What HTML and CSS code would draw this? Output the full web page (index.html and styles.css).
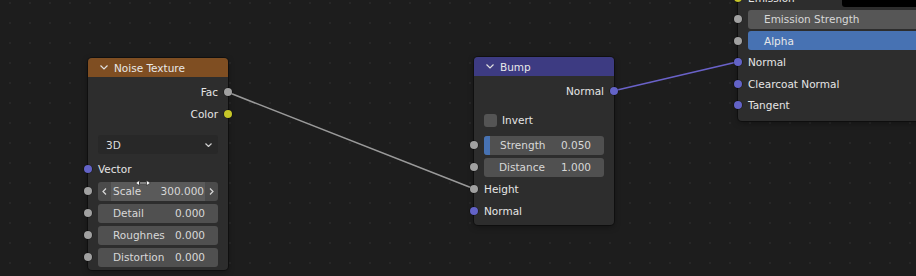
FILE: index.html
```html
<!DOCTYPE html>
<html lang="en">
<head>
  <meta charset="UTF-8" />
  <meta name="viewport" content="width=device-width, initial-scale=1.0" />
  <title>Node Editor</title>
  <link rel="stylesheet" href="styles.css">
</head>
<body>
  <div class="editor">
    <svg class="links" width="916" height="276" viewBox="0 0 916 276">
      <line class="link link-grey" x1="228" y1="92.3" x2="474.5" y2="189" />
      <line class="link link-vector" x1="614" y1="90.7" x2="738" y2="61.7" />
    </svg>

    <!-- Noise Texture -->
    <div class="node node-noise">
      <div class="node-header header-texture">
        <svg class="chevron" width="8" height="5" viewBox="0 0 8 5"><polyline points="0.5,0.5 4,4 7.5,0.5" /></svg>
        <span>Noise Texture</span>
      </div>
      <div class="node-body">
        <div class="row row-out"><span>Fac</span><i class="socket out grey"></i></div>
        <div class="row row-out"><span>Color</span><i class="socket out yellow"></i></div>
        <div class="dropdown">
          <span>3D</span>
          <svg class="chevron small" width="7" height="4" viewBox="0 0 7 4"><polyline points="0.5,0.5 3.5,3.5 6.5,0.5" /></svg>
        </div>
        <div class="row row-in gap-top"><i class="socket in purple"></i><span>Vector</span></div>
        <div class="row row-field">
          <i class="socket in grey"></i>
          <div class="field field-hover">
            <span class="arrow">
              <svg width="5" height="7" viewBox="0 0 5 7"><polyline points="4,0.5 1,3.5 4,6.5" /></svg>
            </span>
            <span class="field-mid"><span>Scale</span><span>300.000</span></span>
            <span class="arrow">
              <svg width="5" height="7" viewBox="0 0 5 7"><polyline points="1,0.5 4,3.5 1,6.5" /></svg>
            </span>
          </div>
          <svg class="cursor" width="16" height="6" viewBox="0 0 16 6">
            <polygon points="0.5,3 4.5,0.5 4.5,5.5" />
            <rect x="4.5" y="2.2" width="7" height="1.6" />
            <polygon points="15.5,3 11.5,0.5 11.5,5.5" />
          </svg>
        </div>
        <div class="row row-field">
          <i class="socket in grey"></i>
          <div class="field"><span>Detail</span><span>0.000</span></div>
        </div>
        <div class="row row-field">
          <i class="socket in grey"></i>
          <div class="field"><span>Roughnes</span><span>0.000</span></div>
        </div>
        <div class="row row-field">
          <i class="socket in grey"></i>
          <div class="field"><span>Distortion</span><span>0.000</span></div>
        </div>
      </div>
    </div>

    <!-- Bump -->
    <div class="node node-bump">
      <div class="node-header header-vector">
        <svg class="chevron" width="8" height="5" viewBox="0 0 8 5"><polyline points="0.5,0.5 4,4 7.5,0.5" /></svg>
        <span>Bump</span>
      </div>
      <div class="node-body">
        <div class="row row-out"><span>Normal</span><i class="socket out purple"></i></div>
        <div class="row row-check"><i class="checkbox"></i><span>Invert</span></div>
        <div class="row row-field gap-small">
          <i class="socket in grey"></i>
          <div class="field slider">
            <i class="slider-fill" style="width: 5%"></i>
            <span>Strength</span><span>0.050</span>
          </div>
        </div>
        <div class="row row-field">
          <i class="socket in grey"></i>
          <div class="field"><span>Distance</span><span>1.000</span></div>
        </div>
        <div class="row row-in"><i class="socket in grey"></i><span>Height</span></div>
        <div class="row row-in"><i class="socket in purple"></i><span>Normal</span></div>
      </div>
    </div>

    <!-- Principled BSDF (cut off) -->
    <div class="node node-bsdf">
      <div class="node-body">
        <div class="row row-in bsdf-row">
          <i class="socket in yellow"></i><span>Emission</span><i class="swatch"></i>
        </div>
        <div class="row row-field bsdf-row">
          <i class="socket in grey"></i>
          <div class="field field-wide"><span>Emission Strength</span></div>
        </div>
        <div class="row row-field bsdf-row">
          <i class="socket in grey"></i>
          <div class="field field-wide field-active"><span>Alpha</span></div>
        </div>
        <div class="row row-in bsdf-row"><i class="socket in purple"></i><span>Normal</span></div>
        <div class="row row-in bsdf-row"><i class="socket in purple"></i><span>Clearcoat Normal</span></div>
        <div class="row row-in bsdf-row"><i class="socket in purple"></i><span>Tangent</span></div>
      </div>
    </div>
  </div>
</body>
</html>
```

FILE: styles.css
```css
body {
  margin: 0;
  background: #1d1d1d;
  font-family: 'DejaVu Sans', sans-serif;
  font-size: 10.5px;
  color: #e5e5e5;
}
.editor {
  position: relative;
  width: 916px;
  height: 276px;
  overflow: hidden;
  background-color: #1d1d1d;
  background-image: radial-gradient(circle, #272727 0.9px, transparent 1.2px);
  background-size: 20px 20px;
  background-position: 0px -7px;
}
.links {
  position: absolute;
  left: 0;
  top: 0;
}
.link {
  stroke-width: 1.6;
  stroke-linecap: round;
}
.link-grey {
  stroke: #9a9a9a;
}
.link-vector {
  stroke: #6a62c9;
}

/* nodes */
.node {
  position: absolute;
  width: 140px;
  background: #2d2d2d;
  border-radius: 4px;
  box-shadow: 0 0 0 1px rgba(0, 0, 0, 0.35), 0 2px 6px rgba(0, 0, 0, 0.35);
}
.node-noise {
  left: 88px;
  top: 58px;
}
.node-bump {
  left: 474px;
  top: 57px;
}
.node-bsdf {
  left: 738px;
  top: -20px;
  width: 220px;
}
.node-header {
  display: flex;
  align-items: center;
  height: 19px;
  padding-left: 12px;
  border-radius: 4px 4px 0 0;
  color: #e8e8e8;
}
.header-texture {
  background: #7f4e22;
}
.header-vector {
  background: #3d3b82;
}
.chevron {
  margin-right: 6px;
  fill: none;
  stroke: #e0e0e0;
  stroke-width: 1.2;
}
.chevron.small {
  margin-right: 0;
  stroke: #cfcfcf;
}
.node-body {
  padding: 4px 0 2px;
}
.node-bump .node-body {
  padding-bottom: 3px;
}
.node-bsdf .node-body {
  padding: 6.75px 0 5px;
}

/* rows */
.row {
  position: relative;
  display: flex;
  align-items: center;
  height: 22px;
  padding: 0 10px;
}
.row-out {
  justify-content: flex-end;
}
.gap-top {
  margin-top: 4px;
}
.gap-small {
  margin-top: 3px;
}
.bsdf-row {
  height: 21.5px;
}
.socket {
  position: absolute;
  top: 50%;
  width: 8px;
  height: 8px;
  margin-top: -4px;
  border-radius: 50%;
  box-shadow: 0 0 0 0.6px rgba(0, 0, 0, 0.5);
}
.socket.in {
  left: -4px;
}
.socket.out {
  right: -4px;
}
.grey {
  background: #a1a1a1;
}
.yellow {
  background: #c7c729;
}
.purple {
  background: #6363c7;
}

/* widgets */
.dropdown {
  display: flex;
  align-items: center;
  justify-content: space-between;
  height: 19px;
  margin: 10px 10px 0;
  padding: 0 6px 0 8px;
  background: #282828;
  border-radius: 3px;
  color: #dcdcdc;
}
.field {
  position: relative;
  display: flex;
  align-items: center;
  justify-content: space-between;
  flex: 1;
  height: 19px;
  padding: 0 13px 0 15px;
  background: #505050;
  border-radius: 3px;
  color: #d8d8d8;
  overflow: hidden;
}
.field span {
  position: relative;
}
.field-hover {
  padding: 0;
  background: #4b4b4b;
}
.field-mid {
  display: flex;
  justify-content: space-between;
  flex: 1;
  height: 19px;
  align-items: center;
  padding: 0 1px 0 2px;
  background: #5a5a5a;
}
.arrow {
  display: flex;
  align-items: center;
  justify-content: center;
  width: 13px;
  height: 19px;
}
.arrow svg {
  fill: none;
  stroke: #d8d8d8;
  stroke-width: 1.2;
}
.cursor {
  position: absolute;
  left: 47px;
  top: 0px;
  fill: #ffffff;
  stroke: #222;
  stroke-width: 0.6;
}
.slider-fill {
  position: absolute;
  left: 0;
  top: 0;
  bottom: 0;
  background: #4772b3;
}
.slider {
  padding-left: 16px;
}
.field-wide {
  justify-content: flex-start;
  padding-left: 16px;
  background: #565656;
}
.field-active {
  background: #4772b3;
  color: #e8e8e8;
}
.row-check {
  margin-top: 7px;
}
.checkbox {
  width: 13px;
  height: 13px;
  margin-right: 5px;
  background: #545454;
  border-radius: 3px;
}
.swatch {
  position: absolute;
  left: 104px;
  top: 1.75px;
  width: 120px;
  height: 18px;
  background: #000000;
  border-radius: 3px;
}
```
